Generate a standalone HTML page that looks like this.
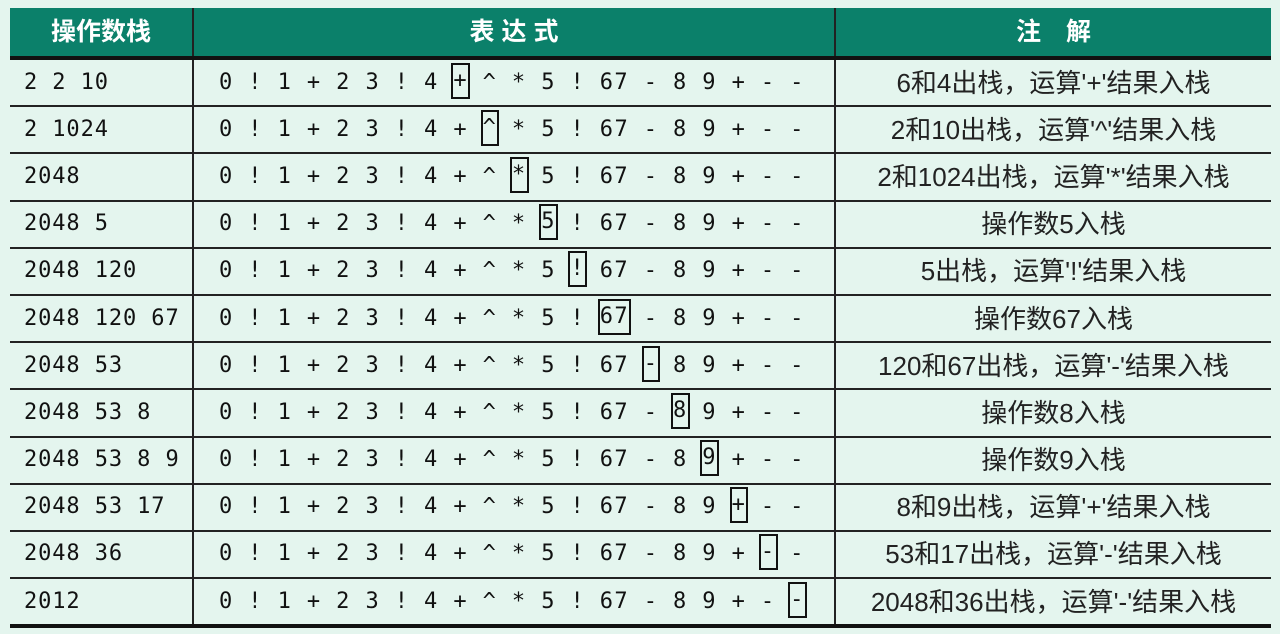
<!DOCTYPE html>
<html><head><meta charset="utf-8"><style>
body{margin:0;background:#e4f5ee;width:1280px;height:634px;overflow:hidden;}
table{position:absolute;left:10px;top:8px;width:1261px;border-collapse:collapse;table-layout:fixed;}
th{background:#0b806a;color:#fff;font:bold 25px "Liberation Sans","Noto Sans CJK SC",sans-serif;height:48px;line-height:30px;padding:0;border-bottom:4px solid #111;border-left:2px solid #222;}
th:first-child{border-left:none}
td{height:45.2px;line-height:30px;padding:0;border-bottom:2px solid #222;border-left:2px solid #222;color:#111;white-space:nowrap;overflow:hidden;}
td:first-child{border-left:none;padding-left:14px;font:22px/30px "DejaVu Sans Mono",monospace;letter-spacing:0.9px;}
td.e{padding-left:25px;font:22px/30px "DejaVu Sans Mono",monospace;letter-spacing:1.4px;}
td.n{text-align:center;font:26px/30px "Liberation Sans","Noto Sans CJK SC",sans-serif;color:#222;}
tr:last-child td{border-bottom:4px solid #111;}
.b{display:inline-block;outline:2px solid #111;outline-offset:0px;height:32px;line-height:32px;vertical-align:middle;margin-top:-4px;}
</style></head><body>
<table>
<colgroup><col style="width:183px"><col style="width:642px"><col></colgroup>
<tr><th>操作数栈</th><th>表 达 式</th><th>注　解</th></tr>
<tr><td>2 2 10</td><td class="e">0 ! 1 + 2 3 ! 4 <span class="b">+</span> ^ * 5 ! 67 - 8 9 + - -</td><td class="n">6和4出栈，运算'+'结果入栈</td></tr>
<tr><td>2 1024</td><td class="e">0 ! 1 + 2 3 ! 4 + <span class="b">^</span> * 5 ! 67 - 8 9 + - -</td><td class="n">2和10出栈，运算'^'结果入栈</td></tr>
<tr><td>2048</td><td class="e">0 ! 1 + 2 3 ! 4 + ^ <span class="b">*</span> 5 ! 67 - 8 9 + - -</td><td class="n">2和1024出栈，运算'*'结果入栈</td></tr>
<tr><td>2048 5</td><td class="e">0 ! 1 + 2 3 ! 4 + ^ * <span class="b">5</span> ! 67 - 8 9 + - -</td><td class="n">操作数5入栈</td></tr>
<tr><td>2048 120</td><td class="e">0 ! 1 + 2 3 ! 4 + ^ * 5 <span class="b">!</span> 67 - 8 9 + - -</td><td class="n">5出栈，运算'!'结果入栈</td></tr>
<tr><td>2048 120 67</td><td class="e">0 ! 1 + 2 3 ! 4 + ^ * 5 ! <span class="b">67</span> - 8 9 + - -</td><td class="n">操作数67入栈</td></tr>
<tr><td>2048 53</td><td class="e">0 ! 1 + 2 3 ! 4 + ^ * 5 ! 67 <span class="b">-</span> 8 9 + - -</td><td class="n">120和67出栈，运算'-'结果入栈</td></tr>
<tr><td>2048 53 8</td><td class="e">0 ! 1 + 2 3 ! 4 + ^ * 5 ! 67 - <span class="b">8</span> 9 + - -</td><td class="n">操作数8入栈</td></tr>
<tr><td>2048 53 8 9</td><td class="e">0 ! 1 + 2 3 ! 4 + ^ * 5 ! 67 - 8 <span class="b">9</span> + - -</td><td class="n">操作数9入栈</td></tr>
<tr><td>2048 53 17</td><td class="e">0 ! 1 + 2 3 ! 4 + ^ * 5 ! 67 - 8 9 <span class="b">+</span> - -</td><td class="n">8和9出栈，运算'+'结果入栈</td></tr>
<tr><td>2048 36</td><td class="e">0 ! 1 + 2 3 ! 4 + ^ * 5 ! 67 - 8 9 + <span class="b">-</span> -</td><td class="n">53和17出栈，运算'-'结果入栈</td></tr>
<tr><td>2012</td><td class="e">0 ! 1 + 2 3 ! 4 + ^ * 5 ! 67 - 8 9 + - <span class="b">-</span></td><td class="n">2048和36出栈，运算'-'结果入栈</td></tr>
</table>
</body></html>
